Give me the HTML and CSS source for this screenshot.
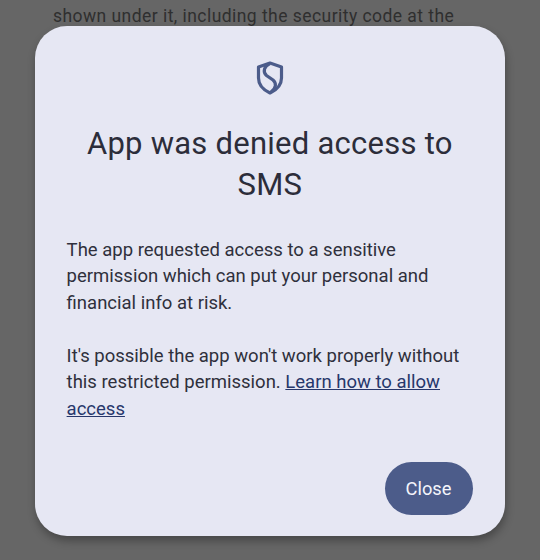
FILE: index.html
```html
<!DOCTYPE html>
<html lang="en">
<head>
<meta charset="utf-8">
<title>Permission dialog</title>
<link rel="stylesheet" href="styles.css">
</head>
<body>
<p class="behind">shown under it, including the security code at the</p>
<div class="dialog">
  <svg class="shield" viewBox="0 0 28 34" width="28" height="34" aria-hidden="true">
    <path d="M14 2 L25.500 6 V17 C25.500 24 20.500 29 14 32 C7.500 29 2.500 24 2.500 17 V6 Z" fill="none" stroke="#4c5c8a" stroke-width="3.200" stroke-linejoin="round"/>
    <path d="M14 2.500 C8 5 6.500 11 10.500 14.500 L17 19 C20.500 22 20.500 27 15 31" fill="none" stroke="#4c5c8a" stroke-width="3.200"/>
  </svg>
  <h1 class="title">App was denied access to SMS</h1>
  <p class="body first">The app requested access to a sensitive permission which can put your personal and financial info at risk.</p>
  <p class="body">It's possible the app won't work properly without this restricted permission. <a class="link" href="#">Learn how to allow access</a></p>
  <div class="actions"><button class="close">Close</button></div>
</div>
</body>
</html>
```
FILE: styles.css
```css
html, body { margin: 0; padding: 0; }
body {
  width: 540px; height: 560px; overflow: hidden;
  background: #666666;
  font-family: Roboto, sans-serif;
  position: relative;
}
.behind {
  position: absolute; left: 53px; top: 4px; margin: 0;
  font-size: 17.500px; line-height: 24px; letter-spacing: 0.45px;
  color: #2f2f2f; white-space: nowrap;
}
.dialog {
  position: absolute; left: 35px; top: 26px;
  width: 470px; height: 510px; box-sizing: border-box;
  padding: 35px 32px 21px 31.600px;
  background: #e6e7f3; border-radius: 32px;
  box-shadow: 1px 5px 8px rgba(0,0,0,0.3);
  display: flex; flex-direction: column;
}
.shield { align-self: center; display: block; flex: none; }
.title {
  margin: 27.500px 0 0; font-weight: 400; font-size: 31px; line-height: 41px;
  text-align: center; color: #2c2d3a; letter-spacing: 0.25px;
}
.body {
  margin: 0; font-size: 18.500px; line-height: 26.500px; color: #2f303c;
}
.first { margin: 32px 0 26.500px; }
.link { color: #27376b; text-decoration: underline; }
.actions { margin-top: auto; display: flex; justify-content: flex-end; }
.close {
  width: 88px; height: 53px; border: 0; border-radius: 27px;
  background: #4c5c8a; color: #f4f5fb;
  font-family: Roboto, sans-serif; font-size: 18.300px; padding: 0 1px 0 0;
}
```
